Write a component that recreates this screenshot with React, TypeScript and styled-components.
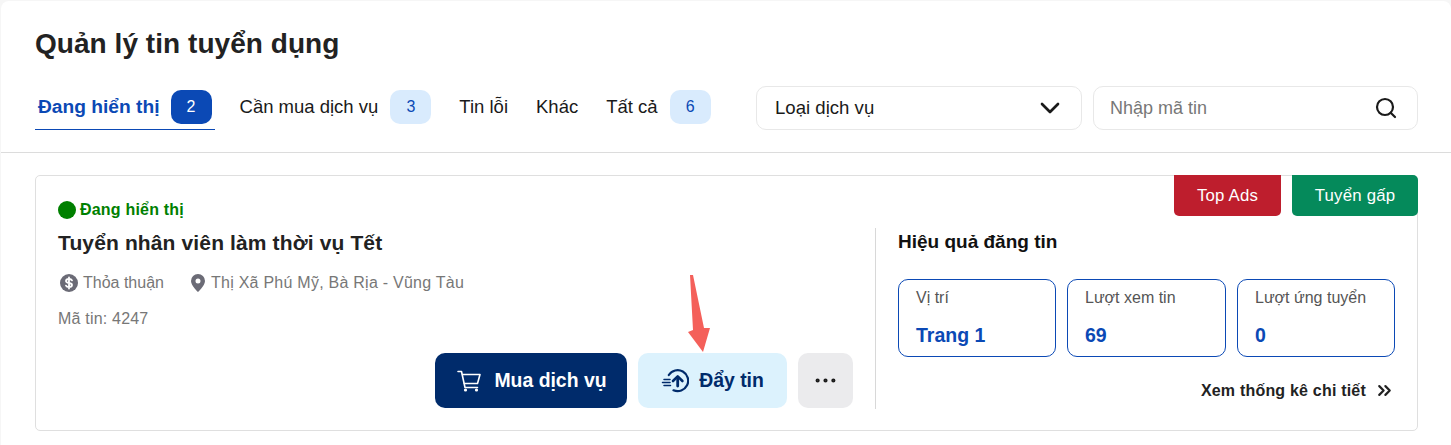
import React from "react";
import styled, { createGlobalStyle } from "styled-components";
import { ChevronDown, ChevronsRight, Ellipsis, Search } from "lucide-react";

const GlobalStyle = createGlobalStyle`
  * { box-sizing: border-box; }
  html, body { margin: 0; padding: 0; background: #f6f6f6; }
  body { font-family: "Liberation Sans", Arial, sans-serif; color: #1a1a1a; }
`;

const tabs = [
  { label: "Đang hiển thị", count: 2, active: true },
  { label: "Cần mua dịch vụ", count: 3 },
  { label: "Tin lỗi" },
  { label: "Khác" },
  { label: "Tất cả", count: 6 },
];

const stats = [
  { label: "Vị trí", value: "Trang 1", width: 158 },
  { label: "Lượt xem tin", value: "69", width: 159 },
  { label: "Lượt ứng tuyển", value: "0", width: 158 },
];

export default function App() {
  return (
    <Page>
      <GlobalStyle />
      <Sheet>
        <Header>
          <Title>Quản lý tin tuyển dụng</Title>
          <Toolbar>
            <Tabs>
              {tabs.map((t) => (
                <Tab key={t.label} $active={t.active}>
                  {t.label}
                  {t.count !== undefined && <Count $active={t.active}>{t.count}</Count>}
                </Tab>
              ))}
            </Tabs>
            <Select>
              Loại dịch vụ
              <ChevronDown size={32} strokeWidth={2} color="#1a1a1a" />
            </Select>
            <SearchBox>
              Nhập mã tin
              <Search size={24} strokeWidth={2.2} color="#1a1a1a" />
            </SearchBox>
          </Toolbar>
        </Header>
        <Card>
          <Badges>
            <Badge $bg="#be1e2d" $width={107}>Top Ads</Badge>
            <Badge $bg="#058a5b" $width={126} $corner>Tuyển gấp</Badge>
          </Badges>
          <Main>
            <Status>
              <Dot />
              Đang hiển thị
            </Status>
            <JobTitle>Tuyển nhân viên làm thời vụ Tết</JobTitle>
            <Meta>
              <MetaItem>
                <svg width="20" height="20" viewBox="0 0 20 20">
                  <circle cx="10" cy="10" r="9" fill="#6b6b76" />
                  <path fill="none" stroke="#fff" strokeWidth="1.800" strokeLinecap="round" d="M13 7.400c-.5-1-1.600-1.400-3-1.400-1.700 0-3 .8-3 2s1.200 1.700 3 2 3 .8 3 2-1.300 2-3 2c-1.400 0-2.500-.4-3-1.400M10 4.500v11" />
                </svg>
                Thỏa thuận
              </MetaItem>
              <MetaItem $tracking={0.25}>
                <svg width="18" height="20" viewBox="0 0 18 20">
                  <path fillRule="evenodd" fill="#6b6b76" d="M9 1a7 7 0 0 0-7 7c0 4.800 7 11 7 11s7-6.200 7-11a7 7 0 0 0-7-7zm0 4.500a2.500 2.500 0 1 1 0 5 2.500 2.500 0 0 1 0-5z" />
                </svg>
                Thị Xã Phú Mỹ, Bà Rịa - Vũng Tàu
              </MetaItem>
            </Meta>
            <Code>Mã tin: 4247</Code>
            <Actions>
              <BuyButton>
                <svg width="24" height="22" viewBox="0 0 24 22" fill="none" stroke="#fff" strokeWidth="1.600" strokeLinecap="round" strokeLinejoin="round">
                  <path d="M1 1.500h3.500L8 17.500h12.500" />
                  <path d="M5.500 4.500H23l-2.500 9H7.300" />
                  <circle cx="8.500" cy="20" r=".8" fill="#fff" />
                  <circle cx="19.500" cy="20" r=".8" fill="#fff" />
                </svg>
                Mua dịch vụ
              </BuyButton>
              <PushButton>
                <svg width="28" height="26" viewBox="0 0 28 26" fill="none" stroke="#002b6b" strokeLinecap="round" strokeLinejoin="round">
                  <path d="M7.800 7A10.500 10.500 0 1 1 12.500 22.300" strokeWidth="2.200" />
                  <path d="M12 13l4.700-4.700L21.400 13" strokeWidth="2.600" />
                  <path d="M16.700 9.500V18" strokeWidth="2.800" />
                  <path d="M3 11.500h6M1.500 14.500h7.500M3 17.500h6.500" strokeWidth="1.500" />
                </svg>
                Đẩy tin
              </PushButton>
              <MoreButton>
                <Ellipsis size={27} strokeWidth={1.7} />
              </MoreButton>
            </Actions>
          </Main>
          <Side>
            <SideTitle>Hiệu quả đăng tin</SideTitle>
            <Stats>
              {stats.map((s) => (
                <Stat key={s.label} $width={s.width}>
                  <StatLabel>{s.label}</StatLabel>
                  <StatValue>{s.value}</StatValue>
                </Stat>
              ))}
            </Stats>
            <Details>
              Xem thống kê chi tiết
              <ChevronsRight size={21} strokeWidth={2.5} />
            </Details>
          </Side>
          <Arrow width="24" height="78" viewBox="0 0 24 78">
            <path fill="#f4605a" d="M2 0 L5 0 L16 53 L22 53 L15 77 L0 57 L5 55 Z" />
          </Arrow>
        </Card>
      </Sheet>
    </Page>
  );
}

const Page = styled.div`
  width: 1451px;
  height: 445px;
  padding: 1px 0 0 1px;
  overflow: hidden;
`;

const Sheet = styled.div`
  height: 444px;
  background: #fff;
  border-radius: 8px 8px 0 0;
`;

const Header = styled.header`
  height: 152px;
  padding: 26px 33px 0 34px;
  border-bottom: 1px solid #dcdcdc;
`;

const Title = styled.h1`
  margin: 0;
  font-size: 28px;
  line-height: 34px;
  font-weight: 700;
  color: #222;
  letter-spacing: 0.05px;
`;

const Toolbar = styled.div`
  display: flex;
  align-items: flex-start;
  margin-top: 25px;
`;

const Tabs = styled.div`
  display: flex;
  width: 721px;
  gap: 28px;
  margin-top: 4px;
`;

const Tab = styled.div<{ $active?: boolean }>`
  display: flex;
  align-items: center;
  gap: 11px;
  height: ${(p) => (p.$active ? "40px" : "34px")};
  padding: 0 ${(p) => (p.$active ? "3px" : "0")} ${(p) => (p.$active ? "5px" : "0")};
  font-size: ${(p) => (p.$active ? "19.2px" : "18.5px")};
  font-weight: ${(p) => (p.$active ? 700 : 400)};
  color: ${(p) => (p.$active ? "#0b49b5" : "#1a1a1a")};
  border-bottom: ${(p) => (p.$active ? "1px solid #0b49b5" : "none")};
  margin-right: ${(p) => (p.$active ? "-3px" : "0")};
`;

const Count = styled.span<{ $active?: boolean }>`
  display: flex;
  align-items: center;
  justify-content: center;
  width: 41px;
  height: 34px;
  margin-left: ${(p) => (p.$active ? "0" : "1px")};
  border-radius: 10px;
  font-size: 16px;
  font-weight: 400;
  background: ${(p) => (p.$active ? "#0b49b5" : "#d9ebfd")};
  color: ${(p) => (p.$active ? "#fff" : "#0b49b5")};
`;

const Select = styled.div`
  display: flex;
  align-items: center;
  justify-content: space-between;
  width: 326px;
  height: 44px;
  padding: 0 15px 0 18px;
  border: 1px solid #e8e8e8;
  border-radius: 10px;
  font-size: 18.6px;
  color: #1a1a1a;
`;

const SearchBox = styled.div`
  display: flex;
  align-items: center;
  justify-content: space-between;
  width: 325px;
  height: 44px;
  margin-left: 11px;
  padding: 0 19px 0 16px;
  border: 1px solid #e8e8e8;
  border-radius: 10px;
  font-size: 18px;
  color: #777;
`;

const Card = styled.section`
  position: relative;
  display: flex;
  width: 1383px;
  height: 256px;
  margin: 22px 0 0 34px;
  padding: 24px 22px 0 22px;
  border: 1px solid #dfdfdf;
  border-radius: 5px;
`;

const Badges = styled.div`
  position: absolute;
  top: -1px;
  right: -1px;
  display: flex;
  gap: 11px;
`;

const Badge = styled.div<{ $bg: string; $width: number; $corner?: boolean }>`
  display: flex;
  align-items: center;
  justify-content: center;
  width: ${(p) => p.$width}px;
  height: 41px;
  border-radius: 0 ${(p) => (p.$corner ? "5px" : "0")} 5px 5px;
  background: ${(p) => p.$bg};
  color: #fff;
  font-size: 16.8px;
  letter-spacing: 0.2px;
`;

const Main = styled.div`
  width: 795px;
  margin-right: 22px;
  flex: none;
`;

const Status = styled.div`
  display: flex;
  align-items: center;
  gap: 4px;
  height: 20px;
  font-size: 16px;
  font-weight: 700;
  letter-spacing: 0.2px;
  color: #008000;
`;

const Dot = styled.span`
  width: 18px;
  height: 18px;
  border-radius: 50%;
  background: #008000;
`;

const JobTitle = styled.h2`
  margin: 10px 0 0;
  font-size: 21px;
  line-height: 26px;
  font-weight: 700;
  letter-spacing: 0.13px;
  color: #222;
`;

const Meta = styled.div`
  display: flex;
  gap: 25px;
  margin-top: 17px;
  padding-left: 1px;
`;

const MetaItem = styled.div<{ $tracking?: number }>`
  display: flex;
  align-items: center;
  gap: 4px;
  font-size: 16px;
  line-height: 20px;
  letter-spacing: ${(p) => p.$tracking ?? 0}px;
  color: #777;
`;

const Code = styled.div`
  margin-top: 16px;
  font-size: 16px;
  line-height: 20px;
  letter-spacing: 0.2px;
  color: #777;
`;

const Actions = styled.div`
  display: flex;
  justify-content: flex-end;
  gap: 11px;
  margin-top: 24px;
`;

const ActionButton = styled.button`
  display: flex;
  align-items: center;
  justify-content: center;
  height: 55px;
  border: 0;
  border-radius: 10px;
  font-family: inherit;
  font-size: 19.4px;
  font-weight: 700;
`;

const BuyButton = styled(ActionButton)`
  width: 192px;
  gap: 13px;
  padding-left: 8px;
  background: #002b6b;
  color: #fff;
`;

const PushButton = styled(ActionButton)`
  width: 149px;
  gap: 10px;
  background: #dcf2fd;
  color: #002b6b;
`;

const MoreButton = styled(ActionButton)`
  width: 55px;
  background: #ebebed;
  color: #1a1a1a;
`;

const Side = styled.aside`
  width: 520px;
  height: 181px;
  margin: 28px 0 0;
  padding-left: 22px;
  border-left: 1px solid #d8d8d8;
`;

const SideTitle = styled.h3`
  margin: 2px 0 0;
  font-size: 19px;
  line-height: 24px;
  font-weight: 700;
  color: #111;
`;

const Stats = styled.div`
  display: flex;
  gap: 11px;
  margin-top: 25px;
`;

const Stat = styled.div<{ $width: number }>`
  width: ${(p) => p.$width}px;
  height: 78px;
  padding: 8px 17px 0;
  border: 1px solid #0b49b5;
  border-radius: 10px;
`;

const StatLabel = styled.div`
  font-size: 16px;
  line-height: 20px;
  color: #555;
`;

const StatValue = styled.div`
  margin-top: 15px;
  font-size: 19.5px;
  line-height: 24px;
  font-weight: 700;
  color: #0b49b5;
`;

const Details = styled.div`
  display: flex;
  align-items: center;
  justify-content: flex-end;
  gap: 8px;
  margin-top: 23px;
  font-size: 16px;
  font-weight: 700;
  letter-spacing: 0.2px;
  color: #222;
`;

const Arrow = styled.svg`
  position: absolute;
  left: 652px;
  top: 99px;
`;
